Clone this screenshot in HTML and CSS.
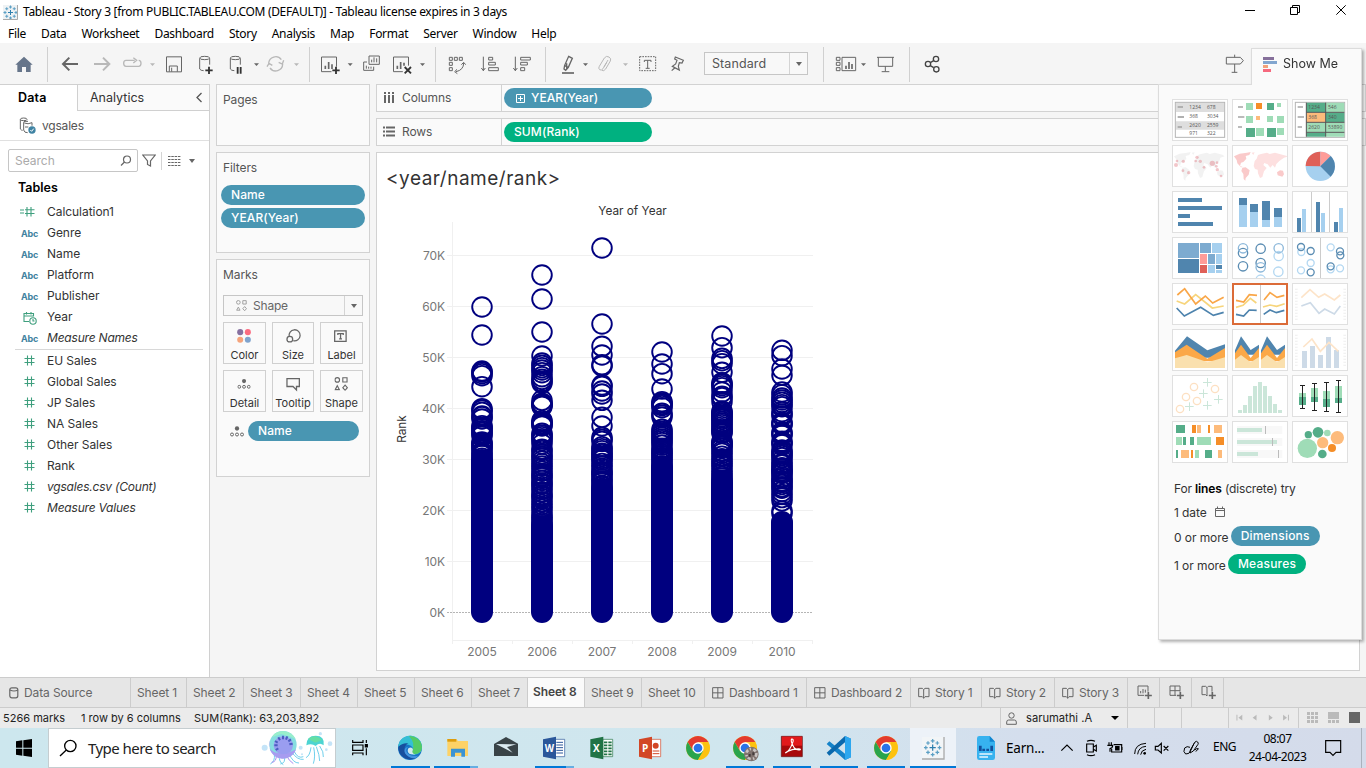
FILE: index.html
```html
<!DOCTYPE html>
<html lang="en">
<head>
<meta charset="utf-8">
<title>Tableau - Story 3</title>
<link rel="stylesheet" href="styles.css">
</head>
<body>
<svg width="0" height="0" class="defs">
  <symbol id="hash" viewBox="0 0 11 11"><path d="M3.500 .5v10M7.500 .5v10M.5 3.500h10M.5 7.500h10"/></symbol>
  <symbol id="detail" viewBox="0 0 42 32"><circle cx="21" cy="7" r="6.500" fill="#666"/><g fill="none" stroke="#666" stroke-width="3"><circle cx="6" cy="25" r="4.500"/><circle cx="21" cy="25" r="4.500"/><circle cx="36" cy="25" r="4.500"/></g></symbol>
  <symbol id="shapes" viewBox="0 0 42 42"><g fill="none" stroke="#666" stroke-width="3.400"><circle cx="9" cy="9" r="7"/><path d="M26 2.500h13v13h-13zM9 27l6.500 12h-13zM33 25l7 8-7 8-7-8z"/></g></symbol>
  <symbol id="book" viewBox="0 0 36 36"><path d="M17 8v27M2 4h11l4 4 4-4h12v25h-12l-4 4-4-4h-11z"/></symbol>
  <symbol id="grid4" viewBox="0 0 36 36"><path d="M2 2h31v31h-31zM17.500 2v31M2 17.500h31"/></symbol>
  <symbol id="chrome" viewBox="0 0 72 72"><circle cx="36" cy="36" r="36" fill="#fc4"/><path d="M5 18A36 36 0 0 1 67 18H36L21 44z" fill="#e33b2e"/><path d="M5 18A36 36 0 0 0 36 72L52 45 21 45z" fill="#2aa44c"/><path d="M67 18A36 36 0 0 1 36 72L52 44 50 18z" fill="#fdc20f"/><circle cx="36" cy="36" r="17" fill="#fff"/><circle cx="36" cy="36" r="13" fill="#2a73e8"/></symbol>
  <symbol id="tableau" viewBox="0 0 60 60"><g fill="none" stroke-width="4"><path stroke="#2f7fae" d="M30 20v20M20 30h20"/><path stroke="#5b9fc4" d="M30 2v12M24 8h12M30 46v12M24 52h12M2 30h12M8 24v12M46 30h12M52 24v12M15 9v12M9 15h12M45 9v12M39 15h12M15 39v12M9 45h12M45 39v12M39 45h12"/></g></symbol>
</svg>

<header class="titlebar">
  <svg class="applogo" width="15" height="15" viewBox="0 0 60 60"><rect width="60" height="60" fill="#eef2f4"/><use href="#tableau"/><path d="M58 0v58H0" fill="none" stroke="#aaa" stroke-width="4"/></svg>
  <span class="apptitle">Tableau - Story 3 [from PUBLIC.TABLEAU.COM (DEFAULT)] - Tableau license expires in 3 days</span>
  <svg class="winctl" width="116" height="24" viewBox="1020 0 348 72" fill="none" stroke="#000" stroke-width="3"><path d="M1035 31.500h30M1171.500 22.500h21v21h-21zM1177.500 22v-5.500h21v21h-6M1309 16l28 28M1337 16l-28 28"/></svg>
</header>
<nav class="menu"><span>File</span><span>Data</span><span>Worksheet</span><span>Dashboard</span><span>Story</span><span>Analysis</span><span>Map</span><span>Format</span><span>Server</span><span>Window</span><span>Help</span></nav>

<div class="toolbar">
  <svg width="47" viewBox="0 129 141 123"><path d="M72 170l26 24h-6v22h-14v-15h-12v15h-14v-22h-6z" fill="#66758a"/></svg><i></i>
  <svg width="39" viewBox="144 129 117 123" class="ic bold"><path d="M234 192h-44M208 173l-19 19 19 19"/></svg>
  <svg width="30" viewBox="261 129 90 123" class="ic dim bold"><path d="M282 192h45M309 173l19 19-19 19"/></svg>
  <svg width="43" viewBox="351 129 129 123" class="ic dim"><path stroke-width="4" d="M404 181h-26q-7 0-7 9t7 9h38q7 0 7-9t-7-9M400 173l10 8-10 8"/><path class="f" d="M450 190h15l-7.500 8z"/></svg>
  <svg width="28" viewBox="480 129 84 123" class="ic"><path d="M499.500 170.500h45v45h-45zM508 215v-17h24v17M515 203v12"/></svg>
  <svg width="34" viewBox="564 129 102 123" class="ic"><ellipse cx="614" cy="174" rx="15" ry="5"/><path d="M599 175v32q3 5 12 5M629 175v19"/><path d="M627 200v22M616 211h22" stroke="#333" stroke-width="5.500"/></svg>
  <svg width="40" viewBox="666 129 120 123" class="ic"><ellipse cx="706" cy="174" rx="15" ry="5"/><path d="M691 175v32q3 5 12 5M721 175v19"/><path d="M713 201v20M722 201v20" stroke="#333" stroke-width="5.500"/><path class="f" d="M762 190h15l-7.500 8z"/></svg>
  <svg width="47" viewBox="786 129 141 123" class="ic dim"><path stroke-width="4" d="M806 190a21 21 0 0 1 38-11M848 192a21 21 0 0 1-38 12M851 181l-4 11-11-5M801 200l6-10 10 6"/><path class="f" d="M882 190h15l-7.500 8z"/></svg><i></i>
  <svg width="47" viewBox="930 129 141 123" class="ic"><path d="M1009.500 200v-29h-45v44h30"/><path stroke-width="5" d="M976 207v-10M986 207v-21M996 207v-14"/><path d="M1008 200v22M997 211h22" stroke="#333" stroke-width="5.500"/><path class="f" d="M1043 190h15l-7.500 8z"/></svg>
  <svg width="29" viewBox="1071 129 87 123" class="ic"><path d="M1107 168h31v25h-31zM1101 186h-10v25h30v-11M1115 187v-8M1122 187v-15M1130 187v-12M1099 206v-9M1106 206v-6M1113 206v-6"/></svg>
  <svg width="49" viewBox="1158 129 147 123" class="ic"><path d="M1225.500 197v-26h-45v44h28"/><path stroke-width="5" d="M1192 207v-10M1202 207v-21M1212 197v-9"/><path d="M1214 201l19 19M1233 201l-19 19" stroke="#333" stroke-width="5.500"/><path class="f" d="M1260 190h15l-7.500 8z"/></svg><i></i>
  <svg width="39" viewBox="-12 129 117 123" class="ic"><path d="M28 172h9v9h-9zM43 172h9v9h-9zM58 172h9v9h-9zM28 187h9v9h-9zM28 203h9v9h-9zM71 189q0 21-23 26M64 194l7-7 6 7M51 208l-7 7 8 6"/></svg>
  <svg width="33" viewBox="105 129 99 123" class="ic"><path d="M130 170v42M124 204l6 8 6-8M146 172h12v8h-12zM146 187h20v8h-20zM146 203h29v9h-29z"/></svg>
  <svg width="37" viewBox="204 129 111 123" class="ic"><path d="M226 170v42M220 204l6 8 6-8M242 172h29v8h-29zM242 187h20v8h-20zM242 203h12v9h-12z"/></svg><i></i>
  <svg width="48" viewBox="318 129 144 123" class="ic"><path stroke-width="4" d="M386 169l11 6-12 27-8 9-5-4 2-11zM374 196l10 6M380 206v-16"/><path stroke-width="5" d="M366 219h36"/><path class="f" d="M429 190h15l-7.500 8z"/></svg>
  <svg width="40" viewBox="462 129 120 123" class="ic dim"><path d="M500 188l-11 18q-5 7-10 3t-1-10l15-25q6-8 14-3t4 12l-14 24q-6 8-11 4M504 180l-12 20"/><path class="f" d="M549 190h15l-7.500 8z"/></svg>
  <svg width="26" viewBox="582 129 78 123" class="ic"><rect x="599" y="170" width="48" height="42" stroke-dasharray="5 3"/><path d="M613 186v-5h20v5M623 181v24M617 205h12"/></svg>
  <svg width="36" viewBox="660 129 108 123" class="ic"><path stroke-width="3.500" d="M706 171l24 10-4 8-8-1-3 11 3 11-21-11 10-7 4-11-7-4zM704 204l-9 8"/></svg>
  <div class="combo"><span>Standard</span><b></b></div><i class="gap"></i>
  <svg width="47" viewBox="1152 129 141 123" class="ic"><path d="M1189 172h11v9h-11zM1189 187h11v9h-11zM1189 203h11v9h-11zM1206 172h41v40h-41z"/><path stroke-width="5" d="M1218 207v-10M1227 207v-21M1236 207v-15"/><path class="f" d="M1263 190h15l-7.500 8z"/></svg>
  <svg width="38" viewBox="1293 129 114 123" class="ic"><path d="M1311 172h51M1315 172v27h43v-27M1336 199v15M1325 215h23"/></svg><i></i>
  <svg width="50" viewBox="30 129 150 123" class="ic"><g stroke="#444" stroke-width="4"><circle cx="84" cy="192" r="8"/><circle cx="108" cy="177" r="8"/><circle cx="109" cy="208" r="8"/><path d="M91 188l10-6M91 197l10 6"/></g></svg>
  <svg width="30" viewBox="960 129 90 123" class="ic sign"><path d="M979 172h42l9 10-9 10h-42zM1004 164v8M1004 192v25M995 217h17"/></svg>
</div>

<main class="main">
  <aside class="data">
    <div class="dtabs"><span class="on">Data</span><span class="off">Analytics<svg width="8" height="11" viewBox="0 0 8 11"><path d="M6.500 1L2 5.500 6.500 10" fill="none" stroke="#555" stroke-width="1.300"/></svg></span></div>
    <div class="source"><svg width="18" height="17" viewBox="58 349 54 51" class="ic"><ellipse cx="72" cy="356" rx="10" ry="4"/><path d="M62 357v28q3 4 7 4M85 362h-9q-4 0-4 5v21q2 9 12 8M74 367q11 5 23-1v9M76 379h10"/><circle cx="97" cy="388" r="11" fill="#3f83a3" stroke="none"/><path d="M92 388l4 4 6-8" stroke="#fff"/></svg><span>vgsales</span></div>
    <div class="searchrow"><div class="sbox"><span>Search</span><svg width="12" height="12" viewBox="0 0 12 12"><circle cx="7" cy="4.500" r="3.500"/><path d="M4.500 7L1 10.500"/></svg></div>
      <svg class="funnel" width="14" height="13" viewBox="0 0 14 13"><path d="M.8 1h12.400L8.500 7v5l-3-1.500V7z"/></svg><i></i>
      <svg class="list" width="13" height="11" viewBox="0 0 13 11"><path d="M0 1.500h13M0 4.500h13M0 7.500h13M0 10.500h13" stroke-dasharray="2.500 .8"/></svg><b class="caret"></b></div>
    <h3>Tables</h3>
    <ul class="fields">
      <li><svg class="eqh" width="15" height="11" viewBox="0 0 15 11"><path d="M0 4h4M0 7h4M7 1v9.500M11 1v9.500M5 3.800h9.500M5 7.500h9.500"/></svg>Calculation1</li>
      <li><b>Abc</b>Genre</li><li><b>Abc</b>Name</li><li><b>Abc</b>Platform</li><li><b>Abc</b>Publisher</li>
      <li><svg class="cal" width="14" height="14" viewBox="0 0 14 14"><path d="M6 10.500H1V2.500h9.500v3M1 5h9.500M3.500 1v2.500M8 1v2.500M10 8v2h1.500"/><circle cx="10" cy="10" r="3.200"/></svg>Year</li>
      <li class="it last"><b>Abc</b>Measure Names</li>
      <li><svg class="h"><use href="#hash"/></svg>EU Sales</li><li><svg class="h"><use href="#hash"/></svg>Global Sales</li><li><svg class="h"><use href="#hash"/></svg>JP Sales</li><li><svg class="h"><use href="#hash"/></svg>NA Sales</li><li><svg class="h"><use href="#hash"/></svg>Other Sales</li><li><svg class="h"><use href="#hash"/></svg>Rank</li>
      <li class="it"><svg class="h"><use href="#hash"/></svg>vgsales.csv (Count)</li><li class="it"><svg class="h"><use href="#hash"/></svg>Measure Values</li>
    </ul>
  </aside>

  <section class="cards">
    <div class="card pages"><h4>Pages</h4></div>
    <div class="card filters"><h4>Filters</h4><span class="pill">Name</span><span class="pill">YEAR(Year)</span></div>
    <div class="card marks"><h4>Marks</h4>
      <div class="marktype"><svg width="11" height="11"><use href="#shapes" opacity=".65"/></svg><span>Shape</span><b></b></div>
      <div class="btns">
        <div><svg viewBox="669 552 129 66"><circle cx="720" cy="576" r="9.500" fill="#8670a0"/><circle cx="744" cy="576" r="9.500" fill="#fb6b80"/><circle cx="720" cy="600" r="9.500" fill="#f5a37b"/><circle cx="744" cy="600" r="9.500" fill="#7fa3cd"/></svg>Color</div>
        <div><svg viewBox="816 552 126 66" class="ic"><path stroke-width="4" d="M867 590a17.500 17.500 0 1 1 13 13"/><circle stroke-width="4" cx="869" cy="598" r="9"/></svg>Size</div>
        <div><svg viewBox="960 552 129 66" class="ic"><path stroke-width="4" d="M1003 572h36v33h-36zM1013 585v-4h17v4M1021.500 581v16M1017 597h9"/></svg>Label</div>
        <div><svg viewBox="669 96 129 66"><use href="#detail" x="711" y="116" width="42" height="32"/></svg>Detail</div>
        <div><svg viewBox="816 96 126 66" class="ic"><path stroke-width="4" d="M860 115h39v25h-9v11l-11-11h-19z"/></svg>Tooltip</div>
        <div><svg viewBox="960 96 129 66"><use href="#shapes" x="1002" y="110" width="43" height="43"/></svg>Shape</div>
      </div>
      <div class="markpill"><svg width="14" height="11"><use href="#detail"/></svg><span class="pill">Name</span></div>
    </div>
  </section>

  <section class="work">
    <div class="shelf"><span class="lab"><svg width="12" height="11" viewBox="0 0 12 11"><path d="M2 0v2M6 0v2M10 0v2M2 3v8M6 3v8M10 3v8" stroke-width="2"/></svg>Columns</span><span class="pill"><svg width="9" height="9" viewBox="0 0 9 9"><path d="M.5.5h8v8h-8zM4.500 2v5M2 4.500h5" fill="none" stroke="#fff"/></svg>YEAR(Year)</span></div>
    <div class="shelf"><span class="lab"><svg width="12" height="11" viewBox="0 0 12 11"><path d="M0 1.500h2M0 5.500h2M0 9.500h2M3 1.500h9M3 5.500h9M3 9.500h9" stroke-width="2"/></svg>Rows</span><span class="pill green">SUM(Rank)</span></div>
    <div class="canvas">
      <h1>&lt;year/name/rank&gt;</h1>
      <svg id="viz" width="460" height="466" viewBox="377 200 460 466"></svg>
    </div>
  </section>
</main>

<aside class="showme">
  <div class="smtab"><svg width="15" height="16" viewBox="0 0 45 48"><path d="M0 3h33v9H0z" fill="#86709b"/><path d="M0 15h42v9H0z" fill="#82a6cf"/><path d="M0 27h15v9H0z" fill="#f2a17a"/><path d="M0 39h24v9H0z" fill="#f6697e"/></svg>Show Me</div>
  <div class="smbody">
    <div class="thumbs">
      <svg viewBox="51 27 168 126"><rect x="61" y="37" width="148" height="105" fill="#fff" stroke="#b4b4b4" stroke-width="3"/><path d="M63 39h144v27H63zM63 94h144v25H63z" fill="#dedede"/><path d="M68 48h16v6H68zM68 78h19v6H68zM68 108h13v6H68z" fill="#b0b0b0"/><g class="tn"><text x="103" y="57">1234</text><text x="156" y="57">678</text><text x="103" y="84">368</text><text x="156" y="84">3034</text><text x="103" y="112">2620</text><text x="156" y="112">2559</text><text x="103" y="136">971</text><text x="156" y="136">322</text></g></svg>
      <svg viewBox="231 27 168 126"><path d="M249 48h15v6h-15zM249 78h19v6h-19zM249 108h12v6h-12z" fill="#bbb"/><path d="M273 39h21v21h-21zM366 39h12v12h-12zM273 78h21v21h-21zM336 78h18v18h-18zM366 78h21v21h-21zM303 114h24v24h-24zM366 114h21v21h-21z" fill="#9fdcb7"/><path d="M336 39h21v21h-21zM273 114h27v27h-27zM336 114h27v27h-27z" fill="#55ad89"/><path d="M303 39h18v18h-18z" fill="#f58e28"/><path d="M303 78h12v12h-12z" fill="#fdbb7b"/></svg>
      <svg viewBox="411 27 168 126"><rect x="421" y="37" width="148" height="105" fill="#fff" stroke="#b4b4b4" stroke-width="3"/><path d="M428 48h16v6h-16zM428 78h19v6h-19zM428 108h13v6h-13z" fill="#bbb"/><path d="M454 38h58v29h-58zM512 68h56v29h-56zM454 128h58v12h-58z" fill="#55ad89"/><path d="M512 38h56v29h-56zM454 98h114v29h-114zM512 128h56v12h-56z" fill="#9fdcb7"/><path d="M454 68h58v29h-58z" fill="#fdbb7b"/><path d="M454 38v102M512 38v102M454 67h114M454 97h114M454 127h114" stroke="#555" stroke-width="3"/><g class="tn"><text x="460" y="57">1234</text><text x="519" y="57">546</text><text x="460" y="88">368</text><text x="519" y="88">340</text><text x="460" y="118">2620</text><text x="519" y="118">53890</text></g></svg>
      <svg viewBox="51 165 168 126"><path d="M57 199l17-8 22-3 11-2-4 9-11 3 2 8-9 10-7 2-3 10 8 3-5 1-11-12-2-10zM82 233l10-1 12 9-3 13-9 10-1 8-5-5-1-15-6-9zM110 188l9-1-4 8zM119 213l6-7 4-11 9-3 18-4 8 4 16-4 22 6 7 5-13 4-3 10-9 9-4 11-7-8-7 8-8-10-10-4-3 6 10 9-8 10-5 17-7 3-6-14-1-11-8-2-4-9zM186 247l9-6 9 1 3 11-5 7-14-4z" fill="#f2f2f2"/><g fill="#dc5f6a" opacity=".35"><circle cx="63" cy="225" r="6"/><circle cx="66" cy="213" r="4"/><circle cx="85" cy="214" r="5"/><circle cx="126" cy="202" r="5"/><circle cx="122" cy="213" r="4"/><circle cx="136" cy="214" r="5"/><circle cx="172" cy="220" r="8"/><circle cx="186" cy="218" r="4"/><circle cx="147" cy="232" r="4"/><circle cx="184" cy="229" r="4"/><circle cx="187" cy="239" r="5"/><circle cx="84" cy="242" r="4"/><circle cx="101" cy="248" r="5"/><circle cx="198" cy="258" r="4"/></g></svg>
      <svg viewBox="231 165 168 126"><path d="M237 199l17-8 22-3 11-2-4 9-11 3 2 8-9 10-7 2-3 10 8 3-5 1-11-12-2-10zM262 233l10-1 12 9-3 13-9 10-1 8-5-5-1-15-6-9zM366 247l9-6 9 1 3 11-5 7-14-4z" fill="#facaca"/><path d="M290 188l9-1-4 8zM299 213l6-7 4-11 9-3 18-4 8 4 16-4 22 6 18 5-13 4-14 10-9 9-4 11-7-8-7 8-8-10-10-4-3 6 10 9-8 10-5 17-7 3-6-14-1-11-8-2-4-9z" fill="#fde0e0"/></svg>
      <svg viewBox="411 165 168 126"><circle cx="496" cy="229" r="44" fill="#a6d0ef"/><path d="M496 229V185A44 44 0 0 0 452 228z" fill="#df6058"/><path d="M496 229V185A44 44 0 0 1 527 198z" fill="#ff9c98"/><path d="M496 229L527 198A44 44 0 0 1 527 260z" fill="#5085ae"/></svg>
      <svg viewBox="51 303 168 126"><path d="M69 324h72v12H69zM69 348h132v12H69zM69 372h36v12H69zM69 396h105v12H69z" fill="#5085ae"/></svg>
      <svg viewBox="231 303 168 126"><path d="M252 345h24v66h-24zM285 366h24v45h-24zM321 390h24v21h-24zM357 381h24v30h-24z" fill="#a6d0ef"/><path d="M252 324h24v21h-24zM285 342h24v24h-24zM321 333h24v57h-24zM357 354h24v27h-24z" fill="#5085ae"/></svg>
      <svg viewBox="411 303 168 126"><path d="M426 384h12v42h-12zM483 336h12v90h-12zM537 396h12v30h-12z" fill="#5085ae"/><path d="M441 357h12v69h-12zM498 369h12v57h-12zM552 354h12v72h-12z" fill="#a6d0ef"/><path d="M469.500 306v120M523.500 306v120" stroke="#ccc" stroke-width="3"/></svg>
      <svg viewBox="51 441 168 126"><path d="M69 459h63v45H69zM135 459h33v30h-33zM159 492h21v30h-21z" fill="#7dabd0"/><path d="M69 507h63v42H69zM183 525h18v12h-18z" fill="#5085ae"/><path d="M171 459h30v30h-30zM183 492h18v30h-18zM159 525h21v24h-21zM183 540h18v9h-18z" fill="#a6d0ef"/><path d="M135 492h21v30h-21z" fill="#ff9c98"/><path d="M135 525h21v24h-21z" fill="#df6058"/></svg>
      <svg viewBox="231 441 168 126" fill="none" stroke-width="4"><g stroke="#5b8db3"><circle cx="264" cy="489" r="14"/><circle cx="264" cy="529" r="14"/><circle cx="317" cy="476" r="14"/><circle cx="317" cy="519" r="14"/></g><g stroke="#8db8da"><circle cx="264" cy="475" r="14"/><circle cx="317" cy="532" r="14"/><circle cx="371" cy="475" r="14"/></g><g stroke="#b4d8f2"><circle cx="371" cy="498" r="14"/><circle cx="370" cy="545" r="14"/><circle cx="317" cy="569" r="14"/></g></svg>
      <svg viewBox="411 441 168 126" fill="none" stroke-width="4"><path d="M496.500 444v120" stroke="#ccc" stroke-width="3"/><g stroke="#b4d8f2"><circle cx="439" cy="486" r="10.500"/><circle cx="467" cy="519" r="10.500"/><circle cx="438" cy="541" r="10.500"/><circle cx="527" cy="472" r="10.500"/><circle cx="527" cy="538" r="10.500"/><circle cx="555" cy="535" r="10.500"/></g><g stroke="#5b8db3"><circle cx="438" cy="471" r="10.500"/><circle cx="467" cy="483" r="10.500"/><circle cx="467" cy="547" r="10.500"/><circle cx="555" cy="484" r="10.500"/><circle cx="556" cy="496" r="10.500"/><circle cx="527" cy="529" r="10.500"/></g></svg>
      <svg viewBox="51 24 168 126" fill="none" stroke-width="5"><path stroke="#f7d57c" d="M65 78l24 9 33-28 50 40 34-6"/><path stroke="#f9a648" d="M67 60l22-19 33 46 29-24 22 21 33-17"/><path stroke="#4d83ad" d="M65 99l23 24 49-26 38 24 31-9"/></svg>
      <svg viewBox="231 24 168 126" class="sel" fill="none" stroke-width="5"><path d="M316.500 30v114" stroke="#ccc" stroke-width="3"/><path stroke="#f7d57c" d="M243 97l21-6 22-21 18 14M324 96l21-6 20 4 24-8"/><path stroke="#f9a648" d="M243 76l23 5 17-22 23 2M327 75l18-22 21 14 22-6"/><path stroke="#4d83ad" d="M243 118l23 5 17-18 22 1M326 118l19-13 19 8 24-7"/></svg>
      <svg viewBox="411 24 168 126" fill="none" stroke-width="5"><path stroke="#fde4c9" d="M439 68l26-24 26 23 18-10 29 18 18-15"/><path stroke="#cddae7" d="M439 93l27-10 26 32 17-13 29 15 18-24"/><path d="M424 41v95M569 41v95" stroke="#eee" stroke-width="8" stroke-dasharray="3 6"/></svg>
      <svg viewBox="51 162 168 126"><path fill="#5085ae" d="M60 227l36-43 61 42 53-18v40H60z"/><path fill="#fba848" d="M60 232l35-23 62 42 53-32v40H60z"/><path fill="#fae0ae" d="M60 250l35-10 63 22 52-15v32H60z"/></svg>
      <svg viewBox="231 162 168 126"><path fill="#5085ae" d="M240 226l18-42 29 41 25-16v30h-72zM318 226l18-42 30 41 24-16v30h-72z"/><path fill="#fba848" d="M240 235l18-26 29 40 25-30v40h-72zM318 235l18-26 30 40 24-30v40h-72z"/><path fill="#fae0ae" d="M240 254l18-14 29 22 25-16v33h-72zM318 254l18-14 30 22 24-16v33h-72z"/></svg>
      <svg viewBox="411 162 168 126"><path d="M441 228h15v51h-15zM465 213h15v66h-15zM489 240h15v39h-15zM513 186h15v93h-15zM537 225h15v54h-15z" fill="#cddae7"/><path stroke="#fde4c9" stroke-width="5" fill="none" d="M445 216l26-24 25 37 26-27 28 27"/><path d="M424 179v95M569 179v95" stroke="#eee" stroke-width="8" stroke-dasharray="3 6"/></svg>
      <svg viewBox="51 300 168 126" fill="none" stroke-width="4"><g stroke="#fde0c2"><circle cx="75" cy="402" r="11"/><circle cx="93" cy="366" r="11"/><circle cx="117" cy="336" r="11"/><circle cx="126" cy="378" r="11"/><circle cx="180" cy="342" r="11"/></g><path stroke="#cbe6d9" stroke-width="3" d="M103.500 382v26M90 394.500h26M157.500 309v26M144 322.500h26M145.500 343v26M132 355.500h26M157.500 378v26M144 391.500h26M190.500 360v26M177 373.500h26"/></svg>
      <svg viewBox="231 300 168 126"><path d="M249 405h12v9h-12zM264 390h12v24h-12zM279 363h12v51h-12zM294 333h12v81h-12zM309 321h12v93h-12zM324 333h12v81h-12zM339 363h12v51h-12zM354 387h12v27h-12zM369 405h12v9h-12z" fill="#cbe6d9"/></svg>
      <svg viewBox="411 300 168 126"><path d="M432 354h21v12h-21zM468 339h21v27h-21zM504 348h21v24h-21zM540 333h21v36h-21z" fill="#9fdcb7"/><path d="M432 366h21v24h-21zM468 366h21v15h-21zM504 372h21v24h-21zM540 369h21v15h-21z" fill="#55ad89"/><path d="M442.500 331v70M435 331.500h15M435 400.500h15M478.500 325v81M471 325.500h15M471 406.500h15M514.500 322v88M507 322.500h15M507 409.500h15M550.500 316v96M543 316.500h15M543 412.500h15" stroke="#222" stroke-width="3"/></svg>
      <svg viewBox="51 438 168 126"><path d="M63 450h27v24H63zM84 486h9v24h-9zM105 486h12v24h-12zM63 525h6v24h-6zM150 525h21v24h-21z" fill="#55ad89"/><path d="M111 450h12v24h-12zM159 450h6v24h-6zM183 486h24v24h-24zM108 525h6v24h-6z" fill="#f58e28"/><path d="M126 450h12v24h-12zM177 450h24v24h-24zM78 525h24v24H78zM189 525h12v24h-12z" fill="#fdbb7b"/><path d="M63 486h18v24H63zM126 486h42v24h-42zM120 525h12v24h-12z" fill="#9fdcb7"/></svg>
      <svg viewBox="231 438 168 126"><path d="M246 453h136v24H246zM246 489h136v24H246zM246 525h136v24H246z" fill="#f8f8f8"/><path d="M246 459h75v12h-75zM246 495h120v12H246zM246 531h63v12h-63z" fill="#cbe6d9"/><path d="M331.500 453v24M352.500 489v24M370.500 525v24" stroke="#bbb" stroke-width="3"/></svg>
      <svg viewBox="411 438 168 126"><g fill="#9fdcb7"><circle cx="457" cy="520" r="29"/><circle cx="517" cy="474" r="10"/></g><g fill="#55ad89"><circle cx="489" cy="472" r="16"/><circle cx="460" cy="479" r="11"/><circle cx="502" cy="537" r="13"/></g><g fill="#fdbb7b"><circle cx="503" cy="503" r="17"/><circle cx="547" cy="488" r="20"/></g><circle cx="531" cy="519" r="12" fill="#f58e28"/></svg>
    </div>
    <p class="p1">For <b>lines</b> (discrete) try</p>
    <p class="p2">1 date <svg width="10" height="11" viewBox="0 0 10 11"><path d="M.5 2.500h9v8h-9zM.5 4.500h9M2.500 .5v2M7.500 .5v2" fill="none" stroke="#666"/></svg></p>
    <p class="p3">0 or more <span class="pill">Dimensions</span></p>
    <p class="p4">1 or more <span class="pill green">Measures</span></p>
  </div>
</aside>

<nav class="tabs">
  <span class="ds"><svg width="10" height="12" viewBox="0 0 10 12"><rect x=".8" y=".8" width="8" height="10" rx="2"/><path d="M1 3q4 2 8 0"/></svg>Data Source</span>
  <span class="s1">Sheet 1</span><span>Sheet 2</span><span>Sheet 3</span><span>Sheet 4</span><span>Sheet 5</span><span>Sheet 6</span><span class="s7">Sheet 7</span><span class="cur">Sheet 8</span><span>Sheet 9</span><span class="s10">Sheet 10</span>
  <span class="d1"><svg width="12" height="12"><use href="#grid4"/></svg>Dashboard 1</span><span class="d2"><svg width="12" height="12"><use href="#grid4"/></svg>Dashboard 2</span>
  <span class="st1"><svg width="12" height="12"><use href="#book"/></svg>Story 1</span><span class="st2"><svg width="12" height="12"><use href="#book"/></svg>Story 2</span><span class="st2"><svg width="12" height="12"><use href="#book"/></svg>Story 3</span>
  <span class="new"><svg width="16" height="15" viewBox="0 0 48 45"><path d="M33 20V3H3v28h18M11 25v-7M18 25V12M25 23v-9"/><path d="M34 21v21M23.500 31.500h21" stroke-width="5"/></svg></span>
  <span class="new"><svg width="16" height="15" viewBox="0 0 48 45"><path d="M33 20V3H3v28h18M18 3v28M3 17h30"/><path d="M34 21v21M23.500 31.500h21" stroke-width="5"/></svg></span>
  <span class="new"><svg width="16" height="15" viewBox="0 0 48 45"><path d="M33 20V4H22l-4 4-4-4H3v25h11l4 4M18 8v25"/><path d="M34 21v21M23.500 31.500h21" stroke-width="5"/></svg></span>
</nav>

<div class="status">
  <span class="m1">5266 marks</span><span class="m2">1 row by 6 columns</span><span class="m3">SUM(Rank): 63,203,892</span>
  <div class="user"><svg width="11" height="13" viewBox="0 0 11 13"><circle cx="5.500" cy="3.500" r="2.700"/><path d="M.7 12.300V10q0-2 2-2h5.600q2 0 2 2v2.300z"/></svg><span>sarumathi .A</span><b></b></div>
  <i></i><i></i><i class="w"></i>
  <svg class="pager" width="71" height="20" viewBox="985 114 213 60"><path fill="#bababa" d="M1008 134h3v18h-3zM1026 134v18l-12-9zM1070 134v18l-12-9zM1108 134v18l12-9zM1152 134v18l12-9zM1167 134h3v18h-3z"/></svg>
  <svg width="67" height="20" viewBox="1197 114 201 60"><g fill="#bababa"><path d="M1221 126h9v9h-9zM1233 126h9v9h-9zM1245 126h9v9h-9zM1221 138h9v9h-9zM1233 138h9v9h-9zM1245 138h9v9h-9zM1221 150h9v9h-9zM1233 150h9v9h-9zM1245 150h9v9h-9zM1284 126h33v21h-33zM1284 150h9v9h-9zM1296 150h9v9h-9zM1308 150h9v9h-9z"/></g><path fill="#666" d="M1347 126h33v33h-33z"/></svg>
</div>

<footer class="taskbar">
  <svg width="48" viewBox="0 174 144 120"><path d="M48 214l19-3v22H48zM70 210.500l26-3.500v26H70zM48 236h19v21l-19-3zM70 236h26v25l-26-4z"/></svg>
  <div class="search"><svg width="39" viewBox="147 174 117 120" fill="none" stroke="#000" stroke-width="4"><circle cx="211" cy="228" r="17"/><path d="M199 240l-19 18"/></svg><span>Type here to search</span>
    <svg class="jelly" width="74" viewBox="780 174 222 120"><g fill="none" stroke-width="3"><path stroke="#6fd0ec" d="M820 252q3 22-12 30M835 256q-2 20 12 28M850 256q5 24-12 26M864 250q12 30 30 29M872 246q17 25 36 22M880 245q11 22 27 15M930 232q-3 25-15 31M938 232q6 28-1 49M946 230q10 26 10 43M956 228q13 18 11 33"/><path stroke="#a78bee" d="M826 254q1 22-14 23M855 254q8 18 22 27"/></g><circle cx="846" cy="224" r="41" fill="#86dde0"/><path d="M805 224a41 41 0 0 0 80 14q-30 18-59 10t-20-38z" fill="#a79cf0"/><path d="M812 202a41 41 0 0 1 72 6l-15-8-28-8z" fill="#98efcb"/><ellipse cx="847" cy="226" rx="29" ry="27" fill="#9a9df0"/><g stroke="#4a5cc0" stroke-width="6"><path d="M822 213l8 5M832 202l5 9M846 197v11M859 199l-4 10M870 208l-8 6M820 226h10M824 240l8-5M875 221l-10 2"/></g><path d="M916 226q0-29 28-29t24 29q-12-10-24 2-12-9-28-2z" fill="#4cd4d2"/><path d="M921 207q20-18 42 3l-20 8z" fill="#65dea5"/><g fill="#c4e4f8"><circle cx="791" cy="233" r="9"/><circle cx="899" cy="233" r="6"/><circle cx="958" cy="191" r="5"/><circle cx="987" cy="221" r="7"/><circle cx="976" cy="239" r="4"/><circle cx="903" cy="253" r="3"/></g></svg></div>
  <svg width="45" viewBox="1008 174 135 120" fill="none" stroke="#000" stroke-width="3.500"><path d="M1058 210v7h31v-7M1058 225h31v16h-31zM1058 256v-7h31v7M1099 210v9M1099 235v21"/><path d="M1096 224h6v7h-6z" fill="#000"/></svg>
  <svg width="53" viewBox="1143 174 159 120"><circle cx="1230" cy="234" r="36" fill="#1675c6"/><path d="M1195 225a36 36 0 0 1 71 3q2 25-24 26-12-2-5-10 6-15-12-20-17-4-30 9z" fill="#35bfd5"/><path d="M1227 198a36 36 0 0 1 39 32q0 22-24 22-12-1-5-10 10-22-10-44z" fill="#54cb66"/><path d="M1195 230q13-13 30-10-15 8-10 25 8 19 31 20a36 36 0 0 1-51-35z" fill="#174f9e"/><path d="M1225 230q-9 7-5 16 9 15 35 11l-9 8q-20 1-31-15-6-18 10-20z" fill="#4394df"/><path d="M1226 234q7-3 11 1t0 9q0 9 10 9-22 3-24-10 0-6 3-9z" fill="#d3e9ef"/><path fill="#0078d7" d="M1173 288h117v6h-117z"/></svg>
  <svg width="48" viewBox="-18 174 144 120"><path d="M22 207h27l5 6h30v45H22z" fill="#fdd267"/><path d="M22 207h27v8H22z" fill="#dd9c0d"/><path d="M33 236h42v24H64v-12H45v12H33z" fill="#3a93d3"/><path fill="#0078d7" d="M-18 288H90v6H-18z"/><path fill="#66aee2" d="M90 288h24v6H90z"/></svg>
  <svg width="48" viewBox="126 174 144 120"><path d="M162 222l36-21 36 20v37h-72z" fill="#394347"/><path d="M168 222l61 1-28 8 17 17z" fill="#dbeaf0"/></svg>
  <svg width="48" viewBox="270 174 144 120"><path d="M346 208h28v52h-28z" fill="#fff" stroke="#2b579a" stroke-width="2"/><path d="M349 217h20M349 225h20M349 233h20M349 241h20M349 249h20" stroke="#2b579a" stroke-width="3"/><path d="M309 208l39-8v68l-39-8z" fill="#2b579a"/><text class="ofc" x="314" y="245" textLength="28" lengthAdjust="spacingAndGlyphs">W</text><path fill="#0078d7" d="M285 288h93v6h-93z"/><path fill="#66aee2" d="M378 288h24v6h-24z"/></svg>
  <svg width="48" viewBox="414 174 144 120"><path d="M488 208h30v52h-30z" fill="#fff" stroke="#217346" stroke-width="2"/><path d="M492 217h23M492 226h23M492 235h23M492 244h23M492 253h23" stroke="#217346" stroke-width="5" stroke-dasharray="10 3"/><path d="M451 208l39-8v68l-39-8z" fill="#217346"/><text class="ofc" x="459" y="245">X</text></svg>
  <svg width="48" viewBox="558 174 144 120"><path d="M632 208h30v52h-30z" fill="#fff" stroke="#d24726" stroke-width="2"/><circle cx="647" cy="227" r="9" fill="#d24726"/><path d="M638 243h20M638 251h20" stroke="#d24726" stroke-width="3"/><path d="M597 208l39-8v68l-39-8z" fill="#d24726"/><text class="ofc" x="606" y="245">P</text></svg>
  <svg width="47" viewBox="702 174 141 120"><use href="#chrome" x="738" y="198" width="72" height="72"/></svg>
  <svg width="47" viewBox="843 174 141 120"><use href="#chrome" x="879" y="198" width="72" height="72"/><circle cx="934" cy="252" r="22" fill="#80736f"/><circle cx="934" cy="252" r="15" fill="none" stroke="#c9c4c2" stroke-width="8" stroke-dasharray="9 5 4 7"/><path d="M926 252h6v8h-6zM937 247h6v9h-6z" fill="#443c3c"/><path fill="#0078d7" d="M858 288h114v6H858z"/></svg>
  <svg width="47" viewBox="984 174 141 120"><path d="M1024 199h63v61h-63z" fill="#a80a0b" stroke="#641010" stroke-width="2"/><path d="M1026 200h60v27h-60z" fill="#e21a1c"/><path d="M1036 249q14-6 23-34 2-9-4-8-5 5 8 27 8 8 18 5 1-5-24 0-15 4-21 10z" fill="none" stroke="#fff" stroke-width="3.500"/><path fill="#0078d7" d="M999 288h114v6H999z"/></svg>
  <svg width="47" viewBox="1125 174 141 120"><path d="M1215 198l18 8v56l-18 8-55-48 8-8 47 37z" fill="#1583c9"/><path d="M1160 248l55-50v19l-47 40z" fill="#0b69ad"/><path d="M1215 198l18 8v56l-18 8z" fill="#2ca7ef"/><path fill="#0078d7" d="M1140 288h114v6h-114z"/></svg>
  <svg width="48" viewBox="1266 174 144 120"><use href="#chrome" x="1302" y="198" width="72" height="72"/><path fill="#0078d7" d="M1281 288h114v6h-114z"/></svg>
  <svg width="46" viewBox="30 174 138 120"><path d="M30 174h138v120H30z" fill="#edf2f8"/><path d="M66 201h66v66H66z" fill="#f2f5f7"/><path d="M132 201v66H66" fill="none" stroke="#aaa" stroke-width="4"/><use href="#tableau" x="70" y="205" width="56" height="56"/><path fill="#0078d7" d="M30 288h138v6H30z"/></svg>
  <svg width="44" viewBox="168 174 132 120"><path d="M238 198h31l16 17v48q0 7-7 7h-40q-7 0-7-7v-58q0-7 7-7z" fill="#37b2ef"/><path d="M269 198v17h16z" fill="#1185cf"/><path d="M241 243v-16M251 243v-7M263 243v-7M275 243v-16" stroke="#134f9c" stroke-width="8"/><path d="M238 252h39M238 261h26" stroke="#e7f7ff" stroke-width="4"/></svg>
  <span class="earn">Earn...</span>
  <svg width="21" viewBox="468 174 63 120" class="tray"><path d="M484 242l17-17 17 17"/></svg>
  <svg width="26" viewBox="531 174 78 120" class="tray"><path d="M560 222h20v24h-20zM580 231l9-5v17l-9-5M561 214q12-6 24 0M561 254q12 6 24 0"/></svg>
  <svg width="26" viewBox="609 174 78 120" class="tray"><path d="M641 224h24v22h-30v-9M666 231v9M627 217v8M634 217v8M622 226h16q0 9-8 10v9"/><path d="M647 230h10v10h-10z" fill="#000"/></svg>
  <svg width="22" viewBox="687 174 66 120" class="tray"><path d="M704 252q0-30 34-32M713 253q2-22 25-24M722 254q2-14 16-16" stroke-width="3"/><circle cx="734" cy="250" r="4" fill="#000" stroke="none"/></svg>
  <svg width="23" viewBox="753 174 69 120" class="tray"><path d="M766 229h8l10-9v29l-10-9h-8zM791 228l14 14M805 228l-14 14"/></svg>
  <svg width="30" viewBox="822 174 90 120" class="tray"><path stroke-width="3" d="M871 240l14-24q5-4 8 0t1 7l-14 20-10 6zM870 232q-9-5-16 2-6 12 3 18 11 2 16-12l9-20M884 240q6-6 11-4-2 5-8 8"/></svg>
  <span class="eng">ENG</span>
  <span class="clock">08:07<br>24-04-2023</span>
  <svg width="37" viewBox="1239 174 111 120" class="tray"><path d="M1277 212h45v35h-14l-9 9-9-9h-13z"/></svg>
  <i class="peek"></i>
</footer>
<script src="viz.js"></script>
</body>
</html>
```
FILE: viz.js
```js
// Marks are stored per year as a vertical offset in thirds of a pixel below the plot origin (y = 220).
var years = {
  2005: [261,345,453,456,461,467,500,566,570,577,588,590,597,617,622,626,632,637,642,648,666,670,674,678,684],
  2006: [165,237,336,408,429,436,443,450,458,470,478,484,489,541,550,553,556,559,602,606,610,614,618,640,645,650,656,662,672,688,692,702],
  2007: [84,312,379,405,434,438,495,499,513,522,541,592,618,652,658,664,680,686,692,700],
  2008: [396,432,461,507,545,549,553,557,563,580,585,591,628,634,640,645,651,657,662],
  2009: [348,383,415,422,431,457,488,492,497,503,516,529,533,545,573,577,581,585,590,594,598,604,609,614,620,626,631,636,640,663,667,671,675,679],
  2010: [391,407,447,466,516,524,534,540,547,554,560,575,582,588,607,611,615,636,641,646,664,669,674,690,696]
};
// From the last listed mark down to this y the marks thin out in small irregular steps; below it the column is solid.
var solid = {2005: 458, 2006: 524, 2007: 488, 2008: 465, 2009: 480, 2010: 500};
var seed = 7;
function rnd() { seed = (seed * 16807) % 2147483647; return seed / 2147483647; }
var out = '';
for (var k = 0; k < 8; k++) {
  var gy = 612.5 - k * 51;
  out += '<path class="' + (k ? 'grid' : 'zero') + '" d="M447 ' + gy + 'H813"/>' +
    '<text class="ax" text-anchor="end" x="445" y="' + (gy + 4) + '">' + k * 10 + 'K</text>';
}
out += '<path class="grid" d="M452.5 222V640M452 640.500H813M512.500 640v4M572.500 640v4M632.500 640v4M692.500 640v4M752.500 640v4M452.500 640v4M812.500 640v4"/>';
function ring(x, y) {
  return '<circle class="mark" cx="' + x + '" cy="' + y.toFixed(1) + '" r="9.800"/>';
}
Object.keys(years).forEach(function (yr, i) {
  var x = 482 + i * 60, y = 0;
  years[yr].forEach(function (z) { y = 220 + z / 3; out += ring(x, y); });
  while (y < solid[yr]) { y += 1 + rnd() * 2.4; out += ring(x, y); }
  if (yr === '2010') { out += ring(x, 511) + ring(x, 513.5); }
  out += '<path class="stack" d="M' + x + ' ' + (yr === '2010' ? 522 : solid[yr] + 2) + 'V612"/>';
  out += '<text class="ax" text-anchor="middle" x="' + x + '" y="656">' + yr + '</text>';
});
out += '<text class="hd" text-anchor="middle" x="632.500" y="215">Year of Year</text>';
out += '<text class="hd" text-anchor="middle" transform="translate(406 429) rotate(-90)">Rank</text>';
document.getElementById('viz').innerHTML = out;
```
FILE: styles.css
```css
*{box-sizing:border-box}
body{margin:0;width:1366px;height:768px;overflow:hidden;position:relative;display:grid;grid-template-rows:24px 19px 41px 593px 31px 20px 40px;background:#fff;color:#333;font:12px/16px Inter,sans-serif}
svg{display:block;flex:none}
.defs{position:absolute}
h1,h3,h4,p,ul{margin:0;padding:0;font-weight:400}
.titlebar{display:flex;align-items:center;padding-left:3px;color:#000;font:12px/24px "Noto Sans",sans-serif}
.apptitle{margin-left:5px;letter-spacing:-.32px;white-space:nowrap}
.winctl{margin-left:auto;margin-right:10px}
.menu{display:flex;padding-left:8px;gap:15px;color:#000;font:12px/19px "Noto Sans",sans-serif;letter-spacing:-.29px}
.toolbar{display:flex;background:#f5f5f5}
.toolbar>svg{height:41px}
.toolbar>i{width:1px;height:35px;margin-top:4px;background:#d0d0d0;flex:none}
.toolbar>i.gap{margin-left:15px}
.ic{fill:none;stroke:#666;stroke-width:3}
.ic.bold{stroke-width:6}
.ic.dim{stroke:#b8b8b8}
.ic .f{fill:#666;stroke:none}
.ic.dim .f{fill:#b8b8b8}
.toolbar .sign{margin-left:260px}
.combo,.marktype{display:flex;align-items:center;border:1px solid #c6c6c6;background:#f8f8f8}
.combo{width:104px;height:23px;margin:9px 0 0 8px;font-size:12.500px;letter-spacing:.1px;color:#555}
.combo span{padding-left:7px;flex:1}
.combo b,.marktype b{width:18px;height:100%;border-left:1px solid #d4d4d4;display:flex;align-items:center;justify-content:center}
.combo b::after,.marktype b::after,.caret,.user b{content:"";border:3.500px solid transparent;border-top:4px solid #666;border-bottom:0;width:0;height:0}
.main{display:flex;background:#f5f5f5}
.data{width:210px;background:#fff;border-right:1px solid #d0d0d0;border-top:1px solid #d0d0d0}
.dtabs{display:flex;height:26px;font-size:12.500px;line-height:26px}
.dtabs .on{width:77px;padding-left:18px;font-weight:600;color:#000;letter-spacing:.15px}
.dtabs .off{flex:1;display:flex;align-items:center;border:1px solid #d0d0d0;border-width:0 0 1px 1px;padding-left:12px;background:#fafafa}
.off svg{margin-left:51px}
.source{height:30px;border-bottom:1px solid #e0e0e0;display:flex;align-items:center;padding-left:19px;color:#555;gap:5px;letter-spacing:-.2px}
.searchrow{display:flex;align-items:center;height:23px;margin:8px 0 0 8px}
.sbox{width:130px;height:23px;border:1px solid #c6c6c6;border-radius:2px;display:flex;align-items:center;justify-content:space-between;padding:0 5px 0 6px;color:#aaa}
.sbox svg,.funnel,.list{fill:none;stroke:#666;stroke-width:1.200}
.funnel{margin-left:4px}
.searchrow i{width:1px;height:18px;background:#d4d4d4;margin:0 6px 0 5px}
.caret{margin-left:8px}
h3{font-size:12.500px;font-weight:600;color:#000;margin:8px 0 5px 18px;line-height:16px}
.fields{list-style:none}
.fields li{display:flex;align-items:center;height:21px;color:#333;white-space:nowrap;letter-spacing:-.05px}
.fields b{width:26px;margin-left:21px;font-size:9px;color:#4182a0;font-weight:700;padding-top:2px;letter-spacing:-.2px;font-style:normal}
.fields svg{fill:none;stroke:#3f9f7e;stroke-width:1.100}
.h{width:11px;height:11px;margin:0 12.500px 0 23.500px}
.eqh{margin:0 12px 0 20px}
.cal{margin:2px 10px 0 23px}
.fields .it{font-style:italic;letter-spacing:-.2px}
.fields .last{height:23px;padding-bottom:2px;position:relative}
.last::after{content:"";position:absolute;left:15px;right:6px;bottom:0;height:1px;background:#d8d8d8}
.cards{width:166px;padding-left:6px;display:flex;flex-direction:column;gap:6px}
.card{width:154px;border:1px solid #d2d2d2;background:#fafafa}
h4{font-size:12px;color:#555;padding:7px 0 0 6px;letter-spacing:-.1px}
.pages{height:62px}.filters{height:101px}.marks{height:218px}
.pill{display:block;height:20px;border-radius:10px;background:#4996b2;color:#fff;font-size:12px;line-height:19px;padding-left:10px;font-weight:500;letter-spacing:.1px}
.pill.green{background:#00b180}
.filters .pill{width:144px;margin:0 0 3px 4px}
.filters h4{padding-bottom:9px}
.marktype{width:140px;height:21px;margin:12px 0 0 6px;padding-left:12px;color:#666;letter-spacing:-.2px}
.marktype span{flex:1;padding-left:6px}
.btns{display:grid;grid-template-columns:43px 42px 43px;gap:6px;margin:6px 0 0 6px}
.btns div{height:42px;border:1px solid #d0d0d0;text-align:center;font-size:11px;line-height:16px;color:#333;overflow:hidden;white-space:nowrap}
.btns svg{width:100%;height:22px;margin:1px 0 1px}
.markpill{display:flex;align-items:center;margin:9px 0 0 13px}
.markpill .pill{width:111px;margin-left:4px}
.work{flex:1;display:flex;flex-direction:column;gap:6px}
.shelf{height:28px;border:1px solid #d2d2d2;background:#fafafa;display:flex;align-items:center;padding-bottom:1px}
.lab{width:125px;height:27px;border-right:1px solid #d2d2d2;display:flex;align-items:center;gap:7px;padding-left:6px;color:#555;letter-spacing:-.1px}
.lab svg{stroke:#666}
.shelf .pill{width:148px;margin-left:2px;display:flex;align-items:center;letter-spacing:.05px}
.shelf .pill svg{margin:1px 6px 0 2px}
.shelf .pill.green{letter-spacing:.1px}
.canvas{width:984px;height:519px;border:1px solid #d2d2d2;background:#fff}
h1{font-size:19px;line-height:24px;color:#333;padding:14px 0 9px 9px;letter-spacing:.5px}
.grid{fill:none;stroke:#f0f0f0}
.zero{stroke:#b5b5b5;stroke-dasharray:2 1}
.ax{font-size:12px;fill:#777;letter-spacing:-.1px}
.hd{font-size:11.800px;fill:#333}
.mark{fill:none;stroke:#00007f;stroke-width:1.900}
.stack{stroke:#00007f;stroke-width:22;stroke-linecap:round}
.showme{position:absolute;left:1158px;top:48px;width:204px;height:592px;filter:drop-shadow(2px 2px 1.500px rgba(0,0,0,.3));color:#333}
.smtab{margin-left:93px;height:37px;background:#fafafa;border:1px solid #dcdcdc;border-bottom:0;display:flex;align-items:center;padding:0 0 7px 11px;gap:5px;font-size:12.500px;white-space:nowrap;position:relative;z-index:1}
.smbody{height:556px;margin-top:-1px;background:#fafafa;border:1px solid #dcdcdc;padding:14px 0 0 13px}
.thumbs{display:grid;grid-template-columns:repeat(3,56px);gap:4px}
.thumbs svg{width:56px;height:42px;background:#fff;outline:1px solid #e0e0e0;outline-offset:-1px}
.thumbs .sel{outline:2px solid #db6b38;outline-offset:-2px}
.tn{font:15px "Open Sans",sans-serif;fill:#555}
.smbody p{display:flex;align-items:center;padding-left:2px;height:22px;white-space:pre;letter-spacing:-.08px}
.smbody .p1{margin-top:14px;height:24px;letter-spacing:-.15px}
.p1 b{font-weight:600;color:#000}
.smbody .p2{height:24px}
.p2 svg{margin:-4px 0 0 5px}
.smbody .p3{height:25px}
.smbody .p4{height:31px}
.smbody p .pill{padding:0 10px;margin:-4px 0 0 -1px;letter-spacing:.2px}
.tabs{display:flex;background:#e6e6e6;border:1px solid #ccc;border-width:1px 0;line-height:28px;color:#666;letter-spacing:-.12px}
.tabs span{width:57px;border-right:1px solid #ccc;padding-left:6px;display:flex;align-items:center;white-space:nowrap;gap:5px}
.tabs svg{fill:none;stroke:#666;stroke-width:3}
.tabs .ds{width:131px;padding-left:9px}
.ds svg{stroke-width:1.200}
.tabs .s1,.tabs .s7{width:56px}
.tabs .cur{background:#fafafa;color:#444;font-weight:600;padding:0 0 2px 5px;font-size:12px}
.tabs .s10{width:63px}.tabs .d1{width:102px;padding-left:7px}.tabs .d2{width:104px;padding-left:7px}
.tabs .st1{width:71px;padding-left:7px}.tabs .st2{width:73px;padding-left:7px}
.tabs .new{width:32px;padding-left:9px}
.status{display:flex;background:#ebebeb;font-size:11px;line-height:20px;color:#222;white-space:nowrap}
.m1{width:81px;padding-left:3px}.m2{width:113px}
.user{width:127px;margin-left:auto;border-left:1px solid #ccc;display:flex;align-items:center;padding-left:5px;font-size:11.200px}
.user svg{fill:none;stroke:#666}
.user span{width:94px;padding-left:9px}
.user b{border-top-color:#000;border-width:4px 4px 0}
.status i{width:27px;border-left:1px solid #ccc}
.status i.w{width:47px}
.pager{border-left:1px solid #ccc;border-right:1px solid #ccc}
.m3{width:300px}
.taskbar{display:flex;background:linear-gradient(90deg,#cde7ee,#d0e6ee 55%,#d4deed 75%,#d4dbea);color:#000;font-family:"Noto Sans",sans-serif;white-space:nowrap}
.taskbar svg{height:40px}
.search{width:288px;background:#fff;border:1px solid #c5cdd0;display:flex;align-items:center;font-size:15px;color:#222}
.search svg{height:40px;margin-top:-1px}
.search span{letter-spacing:-.55px}
.search .jelly{margin-left:auto}
.ofc{font:700 30px "Open Sans",sans-serif;fill:#fff}
.earn{font-size:13.500px;line-height:40px;width:56px;padding-left:6px;letter-spacing:-.2px}
.tray{fill:none;stroke:#000;stroke-width:3.500}
.eng{font-size:12px;line-height:38px;width:38px;padding-left:9px;letter-spacing:-.5px}
.clock{width:71px;text-align:center;font-size:12px;line-height:18px;padding-top:2px;letter-spacing:-.5px}
.peek{border-left:1px solid #aab2bd;margin-left:11px}
```
